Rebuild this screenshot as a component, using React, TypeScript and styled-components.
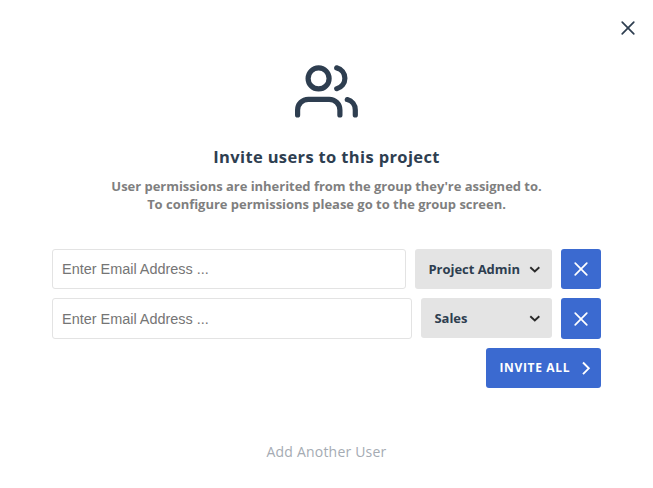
import React from 'react';
import styled, { createGlobalStyle } from 'styled-components';

const GlobalStyle = createGlobalStyle`
  * { box-sizing: border-box; }
  body { margin: 0; background: #fff; }
  button, input { font: inherit; }
`;

const Modal = styled.main`
  width: 653px;
  height: 488px;
  overflow: hidden;
  display: flex;
  flex-direction: column;
  padding: 17px 52px 0;
  background: #fff;
  font-family: 'Open Sans', sans-serif;
  color: #2e3e50;
`;

const CloseButton = styled.button`
  display: flex;
  align-self: flex-end;
  margin-right: -38px;
  width: 22px;
  height: 22px;
  padding: 0;
  border: 0;
  background: none;
  color: #2e3e50;
`;

const UsersIcon = styled.svg`
  align-self: center;
  width: 65px;
  height: 54px;
  margin-top: 26px;
`;

const Title = styled.h1`
  margin: 26px 0 0;
  font-size: 16.5px;
  line-height: 24px;
  font-weight: 700;
  letter-spacing: 0.36px;
  text-align: center;
`;

const Description = styled.p`
  margin: 8px 0 0;
  font-size: 13px;
  line-height: 18px;
  font-weight: 700;
  letter-spacing: -0.03px;
  color: #7f7f7f;
  text-align: center;
`;

const Invitations = styled.form`
  display: flex;
  flex-direction: column;
  gap: 9px;
  width: 549px;
  margin-top: 36px;
`;

const Row = styled.div`
  display: flex;
  gap: 9px;
`;

const EmailInput = styled.input<{ $height: number }>`
  flex: 1;
  min-width: 0;
  height: ${({ $height }) => $height}px;
  padding: 0 9px;
  border: 1px solid #e3e3e3;
  border-radius: 3px;
  font: 14.45px 'Liberation Sans', sans-serif;
  &::placeholder { color: #757575; opacity: 1; }
`;

const GroupSelect = styled.button<{ $width: number }>`
  display: flex;
  align-items: center;
  justify-content: space-between;
  width: ${({ $width }) => $width}px;
  height: 40px;
  padding: 0 11px 0 13.500px;
  border: 0;
  border-radius: 3px;
  background: #e4e4e4;
  color: #2e3e50;
  font-size: 13px;
  font-weight: 700;
  letter-spacing: -0.04px;
  white-space: nowrap;
`;

const RemoveButton = styled.button<{ $height?: number }>`
  display: flex;
  align-items: center;
  justify-content: center;
  width: 40px;
  height: ${({ $height = 40 }) => $height}px;
  padding: 0;
  border: 0;
  border-radius: 3px;
  background: #3b6ad0;
  color: #fff;
`;

const InviteButton = styled(RemoveButton)`
  justify-content: space-between;
  align-self: flex-end;
  width: 115px;
  padding: 0 10px 1px 13.500px;
  font-size: 12px;
  font-weight: 700;
  letter-spacing: 0.65px;
`;

const AddButton = styled.button`
  align-self: center;
  margin-top: 53px;
  padding: 0;
  border: 0;
  background: none;
  color: #a5abb3;
  font-size: 14px;
  line-height: 22px;
  letter-spacing: 0.2px;
`;

const Cross = () => (
  <svg width="22" height="22" viewBox="0 0 22 22" fill="none" stroke="currentColor" strokeWidth="1.7" strokeLinecap="round">
    <path d="M5.200 5.200 16.800 16.800M16.800 5.200 5.200 16.800" />
  </svg>
);

const Chevron = () => (
  <svg width="12" height="12" viewBox="0 0 12 12" fill="none" stroke="#2a2a2a" strokeWidth="1.9">
    <path d="m1.300 4.200 4.500 4.300L10.300 4.200" />
  </svg>
);

const invitations = [
  { group: 'Project Admin', width: 137, height: 40 },
  { group: 'Sales', width: 131, height: 41 },
];

export default function App() {
  return (
    <>
      <GlobalStyle />
      <Modal>
        <CloseButton aria-label="Close"><Cross /></CloseButton>
        <UsersIcon viewBox="0 0 65 54" fill="none" stroke="#2e3e50" strokeWidth="5.2" strokeLinecap="round">
          <circle cx="24.600" cy="13.400" r="10.500" />
          <path d="M42.700 2.900a10.700 10.700 0 0 1 0 20.800M3.600 50v-5a10.700 10.700 0 0 1 10.700-10.700h20.900a10.700 10.700 0 0 1 10.700 10.700v5M53.300 34.600a10.700 10.700 0 0 1 8 10.400v5" />
        </UsersIcon>
        <Title>Invite users to this project</Title>
        <Description>
          User permissions are inherited from the group they're assigned to.<br />
          To configure permissions please go to the group screen.
        </Description>
        <Invitations onSubmit={(event) => event.preventDefault()}>
          {invitations.map(({ group, width, height }) => (
            <Row key={group}>
              <EmailInput $height={height} type="email" placeholder="Enter Email Address ..." />
              <GroupSelect type="button" $width={width}>{group}<Chevron /></GroupSelect>
              <RemoveButton type="button" $height={height} aria-label="Remove user"><Cross /></RemoveButton>
            </Row>
          ))}
          <InviteButton type="submit">
            INVITE ALL
            <svg width="10" height="16" viewBox="0 0 10 16" fill="none" stroke="currentColor" strokeWidth="1.9">
              <path d="m2 2.500 5.800 5.800L2 14.100" />
            </svg>
          </InviteButton>
        </Invitations>
        <AddButton>Add Another User</AddButton>
      </Modal>
    </>
  );
}
